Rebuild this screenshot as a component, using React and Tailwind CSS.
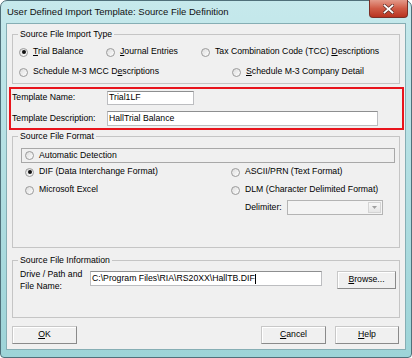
import React from 'react';

const font = "font-['Liberation_Sans',Arial,sans-serif]";

function Radio({ checked, children, className = '' }) {
  return (
    <div className={`flex items-center gap-[5px] h-[14px] shrink-0 ${className}`}>
      <span className="w-[9px] h-[9px] rounded-full border border-[#9a9a9a] bg-gradient-to-br from-[#dcdcdc] to-white flex items-center justify-center shrink-0">
        {checked && <span className="w-[4px] h-[4px] rounded-full bg-[#111]" />}
      </span>
      <span className="whitespace-nowrap">{children}</span>
    </div>
  );
}

function U({ children }) {
  return <span className="underline underline-offset-[1px]">{children}</span>;
}

function Group({ title, className = '', children }) {
  return (
    <fieldset className={`ml-[5px] w-[388px] border border-[#c5c5c5] shrink-0 ${className}`}>
      <legend className="ml-[5px] px-[2px] leading-[12px]">{title}</legend>
      {children}
    </fieldset>
  );
}

function Input({ value, className = '' }) {
  return (
    <div className={`bg-white border border-[#bcbdc0] border-t-[#8e8f90] flex items-center pl-[1px] whitespace-nowrap ${className}`}>
      {value}
    </div>
  );
}

function Button({ children, className = '' }) {
  return (
    <div className={`h-[18px] flex items-center justify-center bg-[#f0f0f0] border border-[#c8c8c8] border-r-[#8a8a8a] border-b-[#8a8a8a] shadow-[inset_1px_1px_0_#fff] ${className}`}>
      {children}
    </div>
  );
}

export default function App() {
  return (
    <div className={`w-[412px] h-[358px] bg-white text-[8.7px] text-black ${font}`}>
      <div className="w-[412px] h-[358px] rounded-t-[7px] rounded-b-[4px] border border-[#50707a] bg-gradient-to-b from-[#c6e9ec] to-[#9dd4d8] flex flex-col">
        {/* Title bar */}
        <div className="h-[22px] flex justify-between shrink-0">
          <div className="pl-[6px] flex items-center text-[9.5px] text-[#111]">
            User Defined Import Template: Source File Definition
          </div>
          <div className="-mt-px mr-[3px] w-[39px] h-[18px] rounded-b-[4px] border border-[#7a2f26] border-t-0 bg-gradient-to-b from-[#e39a8a] via-[#cf5a45] to-[#b8321f] flex items-center justify-center">
            <svg width="11" height="10" viewBox="0 0 11 10">
              <path d="M1.5 1.5 L9.5 8.5 M9.5 1.5 L1.5 8.5" stroke="#5a2a24" strokeWidth="3.2" strokeLinecap="square" />
              <path d="M1.5 1.5 L9.5 8.5 M9.5 1.5 L1.5 8.5" stroke="#fff" strokeWidth="1.8" strokeLinecap="square" />
            </svg>
          </div>
        </div>

        {/* Client area */}
        <div className="ml-[5px] w-[400px] h-[327px] border border-[#86aeb4] bg-[#f0f0f0] flex flex-col">
          <Group title="Source File Import Type" className="mt-[4px] h-[56px]">
            <div className="pl-[6px] pt-[5px] flex flex-col gap-[6px]">
              <div className="flex">
                <Radio checked className="w-[87px]"><U>T</U>rial Balance</Radio>
                <Radio className="w-[95px]"><U>J</U>ournal Entries</Radio>
                <Radio>Tax Combination Code (TCC) <U>D</U>escriptions</Radio>
              </div>
              <div className="flex">
                <Radio className="w-[213px]">Schedule M-3 MCC D<U>e</U>scriptions</Radio>
                <Radio><U>S</U>chedule M-3 Company Detail</Radio>
              </div>
            </div>
          </Group>

          <div className="relative z-10 mt-[3px] ml-[2px] w-[395px] h-[43px] border-2 border-[#e8141c] pl-[1px] pt-[2px] flex flex-col gap-[6px] shrink-0">
            <div className="flex items-center h-[14px]">
              <span className="w-[95px]">Template Name:</span>
              <Input value="Trial1LF" className="w-[87px] h-[14px]" />
            </div>
            <div className="flex items-center h-[15px]">
              <span className="w-[95px]">Template Description:</span>
              <Input value="HallTrial Balance" className="w-[271px] h-[15px]" />
            </div>
          </div>

          <Group title="Source File Format" className="h-[118px]">
            <div className="mt-[6px] ml-[8px] w-[374px] h-[15px] border border-[#a8a8a8] pl-[3px] flex items-center">
              <Radio>Automatic Detection</Radio>
            </div>
            <div className="mt-[2px] ml-[12px] flex">
              <Radio checked className="w-[206px]">DIF (Data Interchange Format)</Radio>
              <Radio>ASCII/PRN (Text Format)</Radio>
            </div>
            <div className="mt-[4px] ml-[12px] flex">
              <Radio className="w-[206px]">Microsoft Excel</Radio>
              <Radio>DLM (Character Delimited Format)</Radio>
            </div>
            <div className="mt-[3px] ml-[232px] flex items-center h-[15px]">
              <span className="w-[42px]">Delimiter:</span>
              <div className="w-[96px] h-[15px] border border-[#b4b4b4] bg-[#f4f4f4] flex justify-end p-px">
                <div className="w-[13px] h-full border border-[#d4d4d4] bg-gradient-to-b from-[#f8f8f8] to-[#e6e6e6] flex items-center justify-center">
                  <svg width="5" height="3" viewBox="0 0 5 3">
                    <path d="M0 0 L5 0 L2.5 3 Z" fill="#a0a0a0" />
                  </svg>
                </div>
              </div>
            </div>
          </Group>

          <Group title="Source File Information" className="mt-[6px] h-[64px]">
            <div className="mt-[2px] ml-[7px] flex items-start">
              <div className="w-[70px] leading-[12px]">
                <div>Drive / Path and</div>
                <div>File Name:</div>
              </div>
              <Input value={<span>C:\Program Files\RIA\RS20XX\HallTB.DIF<span className="inline-block w-px h-[10px] bg-black align-middle" /></span>} className="mt-[3px] w-[232px] h-[15px]" />
              <Button className="mt-[3px] ml-[15px] w-[59px]"><span><U>B</U>rowse...</span></Button>
            </div>
          </Group>

          <div className="mt-[8px] ml-[5px] flex">
            <Button className="w-[65px]"><span><U>O</U>K</span></Button>
            <Button className="ml-[184px] w-[65px]"><span><U>C</U>ancel</span></Button>
            <Button className="ml-[9px] w-[64px]"><span><U>H</U>elp</span></Button>
          </div>
        </div>
      </div>
    </div>
  );
}
